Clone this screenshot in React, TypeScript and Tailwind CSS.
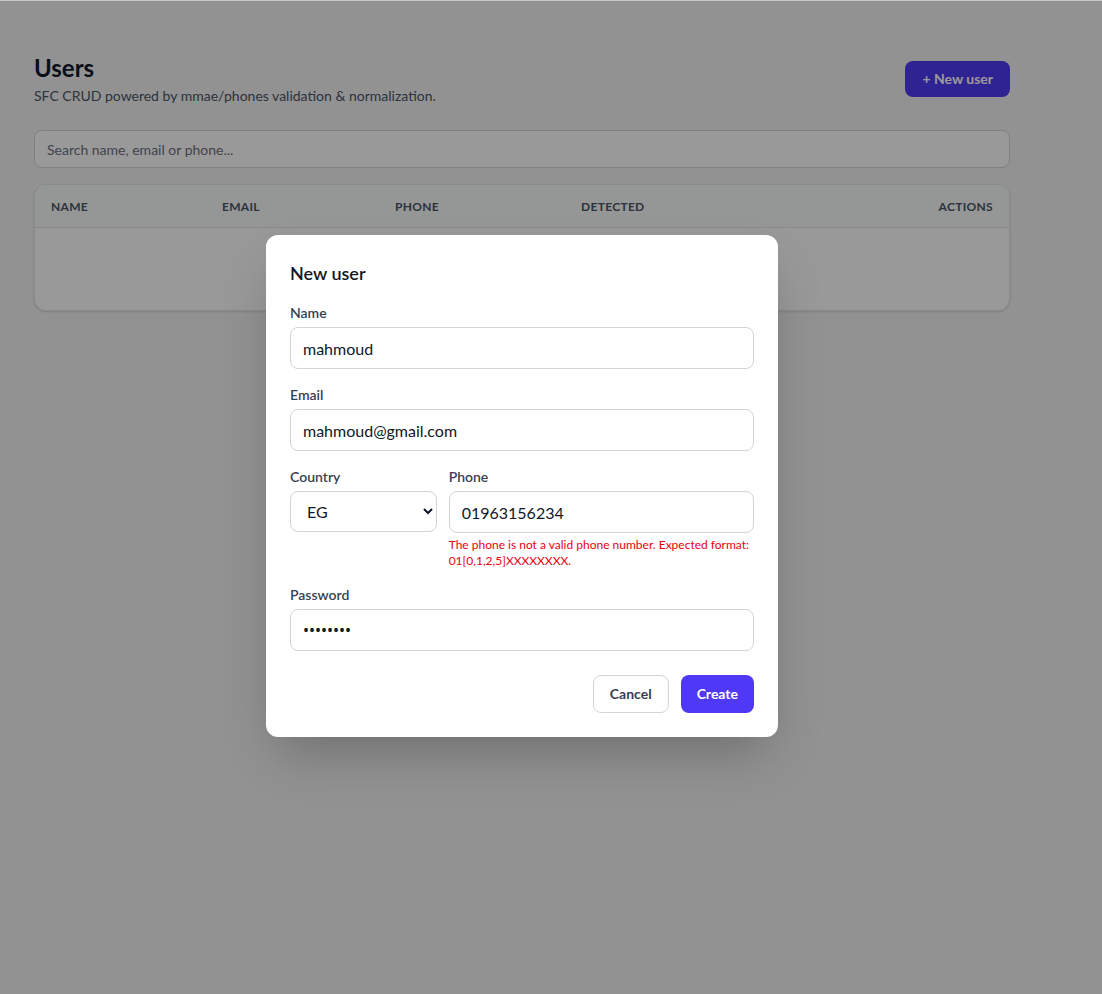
import React from "react";

export default function App() {
  return (
    <div
      className="relative min-h-[994px] w-full bg-gray-100 border-t border-[#c8c8c8]"
      style={{ fontFamily: 'Lato, "Noto Sans", sans-serif' }}
    >
      <div className="w-[976px] ml-[34px] pt-[51px]">
        <div className="flex items-center justify-between">
          <div>
            <h1 className="text-2xl font-bold text-gray-900 leading-8">Users</h1>
            <p className="text-sm text-gray-600 leading-5 mt-0.5">
              SFC CRUD powered by mmae/phones validation &amp; normalization.
            </p>
          </div>
          <button className="-mt-px h-9 px-[17px] rounded-lg bg-[#4f39f6] text-white text-sm font-bold">
            + New user
          </button>
        </div>
        <input
          className="mt-6 w-full h-[38px] rounded-lg border border-gray-300 bg-white px-3 text-sm text-gray-900 placeholder:text-gray-500 outline-none"
          placeholder="Search name, email or phone..."
          readOnly
        />
        <div className="mt-4 rounded-xl border border-gray-200 bg-white shadow-sm overflow-hidden">
          <div className="grid grid-cols-[171px_173px_186px_1fr_auto] bg-gray-50 border-b border-gray-200 text-xs font-bold uppercase text-gray-600 tracking-wide">
            <div className="px-4 pt-[14px] pb-3">Name</div>
            <div className="px-4 pt-[14px] pb-3">Email</div>
            <div className="px-4 pt-[14px] pb-3">Phone</div>
            <div className="px-4 pt-[14px] pb-3">Detected</div>
            <div className="px-4 pt-[14px] pb-3 text-right">Actions</div>
          </div>
          <div className="pt-8 pb-[30px] text-center text-sm text-gray-500">No users found.</div>
        </div>
      </div>

      <div className="absolute inset-0 bg-black/40" />

      <div className="absolute left-[266px] top-[234px] w-[512px] rounded-xl bg-white p-6 shadow-2xl">
        <h2 className="text-lg font-semibold text-gray-900 leading-7">New user</h2>
        <div className="mt-4 space-y-4">
          <div>
            <label className="block text-sm font-semibold text-gray-700 leading-5">Name</label>
            <input
              readOnly
              value="mahmoud"
              className="mt-1 block w-full h-[42px] rounded-lg border border-gray-300 px-3 text-base text-gray-900 outline-none"
            />
          </div>
          <div>
            <label className="block text-sm font-semibold text-gray-700 leading-5">Email</label>
            <input
              readOnly
              value="mahmoud@gmail.com"
              className="mt-1 block w-full h-[42px] rounded-lg border border-gray-300 px-3 text-base text-gray-900 outline-none"
            />
          </div>
          <div className="grid grid-cols-3 gap-3">
            <div>
              <label className="block text-sm font-semibold text-gray-700 leading-5">Country</label>
              <select
                defaultValue="EG"
                className="mt-1 block w-full h-[41px] rounded-lg border border-gray-300 bg-white px-3 text-base text-gray-900 outline-none"
              >
                <option value="EG">EG</option>
              </select>
            </div>
            <div className="col-span-2">
              <label className="block text-sm font-semibold text-gray-700 leading-5">Phone</label>
              <input
                readOnly
                value="01963156234"
                className="mt-1 block w-full h-[42px] rounded-lg border border-gray-300 px-3 text-base text-gray-900 outline-none"
              />
              <p className="mt-1 text-xs leading-4 text-red-600">
                The phone is not a valid phone number. Expected format: 01[0,1,2,5]XXXXXXXX.
              </p>
            </div>
          </div>
          <div>
            <label className="block text-sm font-semibold text-gray-700 leading-5">Password</label>
            <input
              readOnly
              type="password"
              value="password"
              className="mt-1 block w-full h-[42px] rounded-lg border border-gray-300 px-3 text-base text-gray-900 outline-none font-['Noto_Sans',sans-serif]"
            />
          </div>
        </div>
        <div className="mt-6 flex justify-end gap-3">
          <button className="h-[38px] px-4 rounded-lg border border-gray-300 bg-white text-sm font-bold text-gray-700">
            Cancel
          </button>
          <button className="h-[38px] px-4 rounded-lg bg-[#4f39f6] text-sm font-bold text-white">
            Create
          </button>
        </div>
      </div>
    </div>
  );
}
